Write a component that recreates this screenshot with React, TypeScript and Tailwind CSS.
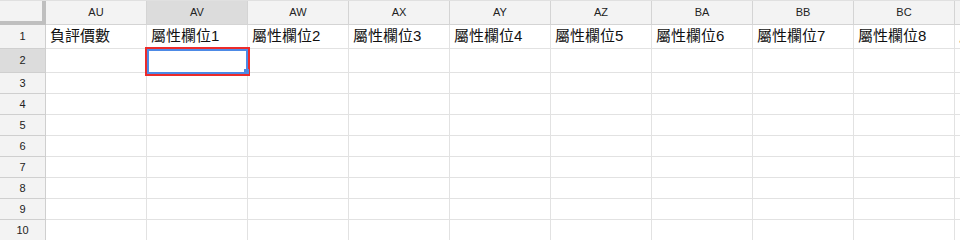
import React from 'react';

const columns = ['AU', 'AV', 'AW', 'AX', 'AY', 'AZ', 'BA', 'BB', 'BC', 'BD'];
const firstRow = ['負評價數', '屬性欄位1', '屬性欄位2', '屬性欄位3', '屬性欄位4', '屬性欄位5', '屬性欄位6', '屬性欄位7', '屬性欄位8', '屬性欄位9'];
const rows = [1, 2, 3, 4, 5, 6, 7, 8, 9, 10];

const font = { fontFamily: '"Liberation Sans", "Noto Sans CJK TC", sans-serif' };

export default function App() {
  return (
    <div className="relative w-[960px] h-[240px] overflow-hidden bg-white border-t border-[#e0e0e0]" style={font}>
      {/* column headers */}
      <div className="flex h-[24px]">
        <div className="shrink-0 w-[46px] h-[24px] bg-[#f3f3f3] border-r-4 border-b-4 border-[#bfbfbf]" />
        {columns.map(col => (
          <div
            key={col}
            className={`shrink-0 w-[101px] h-[24px] flex items-center justify-center text-[11px] text-[#222] border-r border-b border-[#d4d4d4] ${
              col === 'AV' ? 'bg-[#dcdcdc]' : 'bg-[#f3f3f3]'
            }`}
          >
            {col}
          </div>
        ))}
      </div>

      {rows.map(r => {
        const tall = r <= 2;
        return (
          <div key={r} className={`flex ${tall ? 'h-[24px]' : 'h-[21px]'}`}>
            <div
              className={`shrink-0 w-[46px] flex items-center justify-center text-[11px] text-[#222] border-r border-b border-[#cfcfcf] ${
                r === 2 ? 'bg-[#dcdcdc]' : 'bg-[#f3f3f3]'
              }`}
            >
              {r}
            </div>
            {columns.map((col, i) => (
              <div
                key={col}
                className="shrink-0 w-[101px] flex items-center pl-[4px] text-[15px] text-[#111] whitespace-nowrap overflow-hidden border-r border-b border-[#e2e2e2]"
              >
                {r === 1 ? firstRow[i] : ''}
              </div>
            ))}
          </div>
        );
      })}

      {/* selected cell AV2 */}
      <div className="absolute left-[145px] top-[46px] w-[105px] h-[29px] border-2 border-[#ec2b2b]">
        <div className="w-full h-full border-2 border-[#4d8ae6]" />
      </div>
      <div className="absolute left-[244px] top-[68px] w-[5px] h-[5px] bg-[#4d8ae6]" />
    </div>
  );
}
